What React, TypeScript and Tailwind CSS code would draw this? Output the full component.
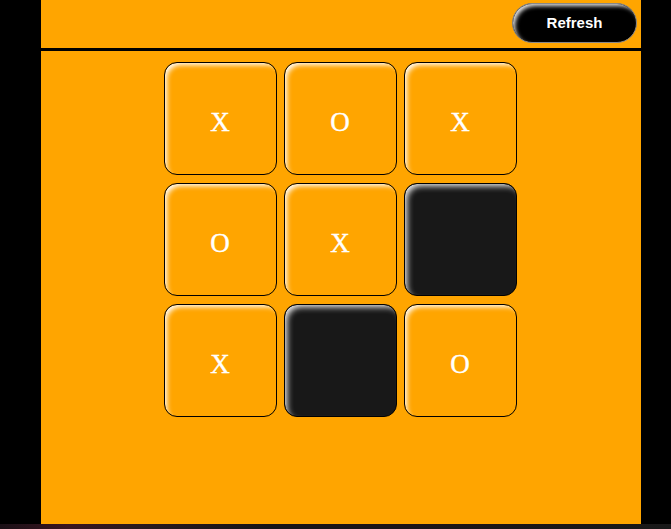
import React from "react";

const board = ["X", "O", "X", "O", "X", "", "X", "", "O"];

export default function App() {
  return (
    <div className="w-[671px] h-[529px] bg-black flex flex-col overflow-hidden">
      <div className="flex-1 flex pl-[41px]">
        <div className="w-[600px] bg-[#ffa500] flex flex-col">
          <div className="h-[51px] flex justify-end items-start pt-[3px] pr-[4px] border-b-[3px] border-black">
            <button className="w-[125px] h-[40px] rounded-full bg-black border border-[#888] text-white font-bold text-[15px] shadow-[inset_3px_3px_4px_-1px_rgba(255,255,255,0.9)] [font-family:'Liberation_Sans',Arial,sans-serif]">
              Refresh
            </button>
          </div>
          <div className="flex justify-center pt-[11px] pr-[2px]">
            <div className="grid grid-cols-[113px_113px_113px] gap-x-[7px] gap-y-[8px]">
              {board.map((v, i) =>
                v ? (
                  <div
                    key={i}
                    className="h-[113px] rounded-[13px] border border-black bg-[#ffa500] shadow-[inset_4px_4px_5px_-2px_rgba(255,255,255,0.95)] flex items-center justify-center pt-[8px] text-white text-[27px] [font-family:'Liberation_Serif','Times_New_Roman',serif] [-webkit-text-stroke:0.4px_white]"
                  >
                    {v}
                  </div>
                ) : (
                  <div
                    key={i}
                    className="h-[113px] rounded-[13px] border border-black bg-[#181818] shadow-[inset_4px_4px_6px_-2px_rgba(255,255,255,0.95)]"
                  />
                )
              )}
            </div>
          </div>
        </div>
      </div>
      <div className="h-[5px] bg-[linear-gradient(90deg,#1a1016_0%,#3a1420_10%,#2a1a1f_20%,#161418_40%,#1c1418_60%,#191919_100%)]" />
    </div>
  );
}
